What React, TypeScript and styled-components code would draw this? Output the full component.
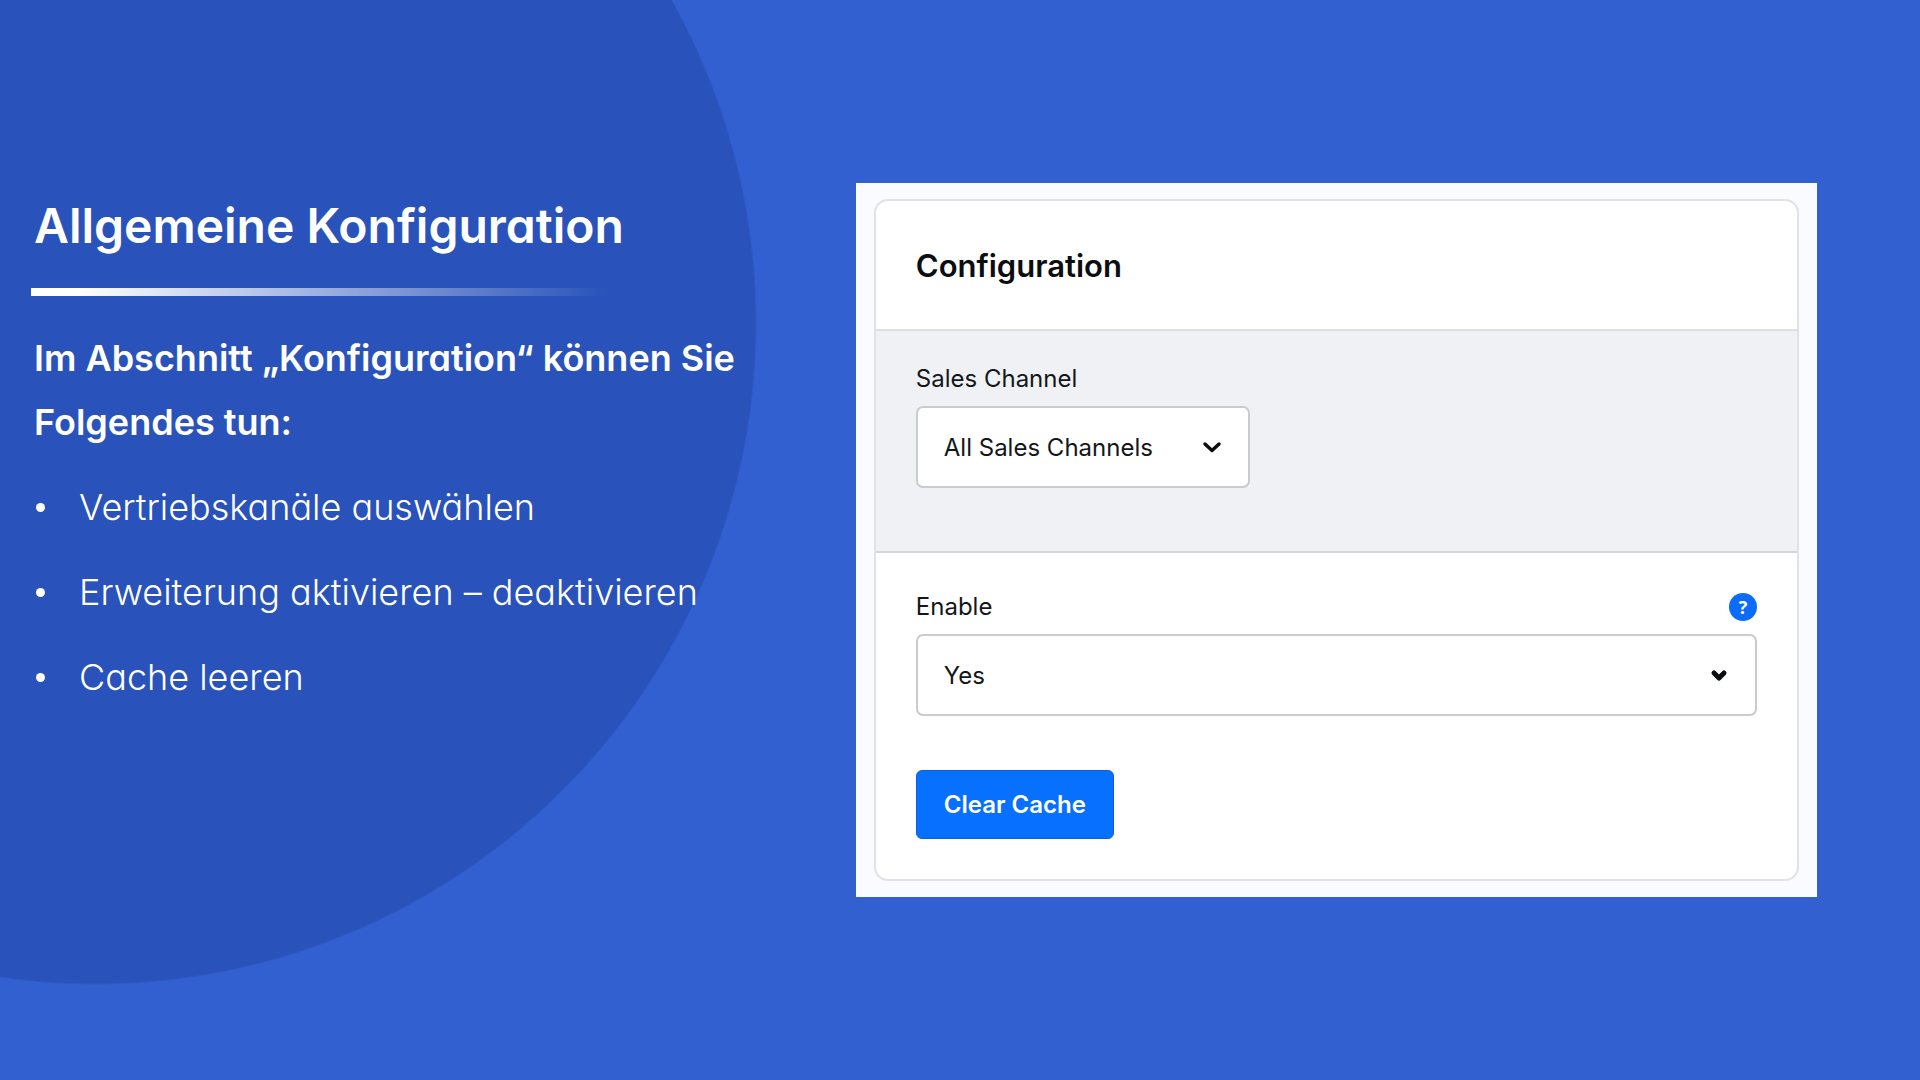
import React from "react";
import styled, { createGlobalStyle } from "styled-components";

const GlobalStyle = createGlobalStyle`
  *, *::before, *::after { box-sizing: border-box; }
  body {
    margin: 0;
    background: #3360d1;
    font-family: Inter, "Liberation Sans", sans-serif;
  }
`;

const Slide = styled.main`
  display: flex;
  align-items: center;
  min-height: 100vh;
  padding-right: 103px;
  background: radial-gradient(circle at 95px 323px, #2953ba 660px, #3360d1 662px);
`;

const Intro = styled.section`
  flex: 1;
  min-width: 0;
  align-self: flex-start;
  padding: 192px 64px 0 34px;
  color: #ffffff;
  font-feature-settings: "cv11";
`;

const Title = styled.h1`
  margin: 0;
  font-size: 48px;
  line-height: 68px;
  font-weight: 600;
`;

const Rule = styled.div`
  width: 600px;
  max-width: 100%;
  height: 8px;
  margin: 28px 0 30px -3px;
  background: linear-gradient(90deg, #ffffff 8%, rgba(255, 255, 255, 0) 96%);
`;

const Lead = styled.p`
  margin: 0;
  font-size: 36px;
  line-height: 64px;
  font-weight: 600;
`;

const Points = styled.ul`
  display: grid;
  gap: 21px;
  margin: 21px 0 0;
  padding: 0;
  list-style: none;
`;

const Point = styled.li`
  display: flex;
  align-items: center;
  gap: 34px;
  padding-left: 2px;
  font-size: 36px;
  line-height: 64px;
  font-weight: 300;

  &::before {
    content: "";
    flex: none;
    width: 9px;
    height: 9px;
    border-radius: 50%;
    background: #ffffff;
  }
`;

const Frame = styled.section`
  flex: none;
  width: 52.9%;
  padding: 16px 18px;
  background: #f9fbff;
`;

const Card = styled.div`
  border: 2px solid #e1e2e8;
  border-radius: 14px;
  background: #ffffff;
  color: #14171a;
  overflow: hidden;
`;

const CardHeader = styled.header`
  padding: 45px 40px 43px;
  border-bottom: 2px solid #dcdfe4;
`;

const CardTitle = styled.h2`
  margin: 0;
  font-size: 31px;
  line-height: 40px;
  font-weight: 600;
  color: #0b0d10;
`;

const ChannelArea = styled.div`
  padding: 29px 40px 63px;
  border-bottom: 2px solid #d3d7dd;
  background: #f0f1f5;
`;

const Settings = styled.div`
  padding: 35px 40px 40px;
`;

const LabelRow = styled.div`
  display: flex;
  align-items: center;
  justify-content: space-between;
  margin-bottom: 8px;
`;

const Label = styled.label`
  font-size: 24px;
  line-height: 38px;
`;

const SelectBox = styled.div<{ $width: string }>`
  position: relative;
  width: ${(p) => p.$width};
`;

const Select = styled.select`
  display: block;
  width: 100%;
  height: 82px;
  padding: 0 72px 0 26px;
  border: 2px solid #c9cbcf;
  border-radius: 7px;
  background: #ffffff;
  color: #14171a;
  font-family: inherit;
  font-size: 24px;
  appearance: none;
`;

const Chevron = styled.svg`
  position: absolute;
  top: 50%;
  right: 28px;
  width: 20px;
  height: 14px;
  transform: translateY(-50%);
  fill: none;
  stroke: #0b0d10;
  stroke-linecap: round;
  stroke-linejoin: round;
  pointer-events: none;
`;

const Help = styled.button`
  display: grid;
  place-items: center;
  width: 28px;
  height: 28px;
  padding: 0;
  border: 0;
  border-radius: 50%;
  background: #0a6cf8;
  color: #ffffff;
  font-family: "Open Sans", sans-serif;
  font-size: 18px;
  line-height: 28px;
  font-weight: 700;
`;

const ClearButton = styled.button`
  display: block;
  height: 69px;
  margin-top: 54px;
  padding: 0 27px;
  border: 1px solid #0a5fe0;
  border-radius: 6px;
  background: #0870ff;
  color: #ffffff;
  font-family: inherit;
  font-size: 24px;
  font-weight: 600;
`;

const points = [
  "Vertriebskanäle auswählen",
  "Erweiterung aktivieren – deaktivieren",
  "Cache leeren",
];

export default function App() {
  return (
    <>
      <GlobalStyle />
      <Slide>
        <Intro>
          <Title>Allgemeine Konfiguration</Title>
          <Rule />
          <Lead>Im Abschnitt „Konfiguration“ können Sie Folgendes tun:</Lead>
          <Points>
            {points.map((text) => (
              <Point key={text}>{text}</Point>
            ))}
          </Points>
        </Intro>
        <Frame>
          <Card>
            <CardHeader>
              <CardTitle>Configuration</CardTitle>
            </CardHeader>
            <ChannelArea>
              <LabelRow>
                <Label htmlFor="channel">Sales Channel</Label>
              </LabelRow>
              <SelectBox $width="334px">
                <Select id="channel">
                  <option>All Sales Channels</option>
                </Select>
                <Chevron viewBox="0 0 20 14" strokeWidth="3.5">
                  <path d="M3 4 L10 10.5 L17 4" />
                </Chevron>
              </SelectBox>
            </ChannelArea>
            <Settings>
              <LabelRow>
                <Label htmlFor="enable">Enable</Label>
                <Help type="button">?</Help>
              </LabelRow>
              <SelectBox $width="100%">
                <Select id="enable">
                  <option>Yes</option>
                </Select>
                <Chevron viewBox="0 0 20 14" strokeWidth="5">
                  <path d="M5 5 L10 10 L15 5" />
                </Chevron>
              </SelectBox>
              <ClearButton type="button">Clear Cache</ClearButton>
            </Settings>
          </Card>
        </Frame>
      </Slide>
    </>
  );
}
